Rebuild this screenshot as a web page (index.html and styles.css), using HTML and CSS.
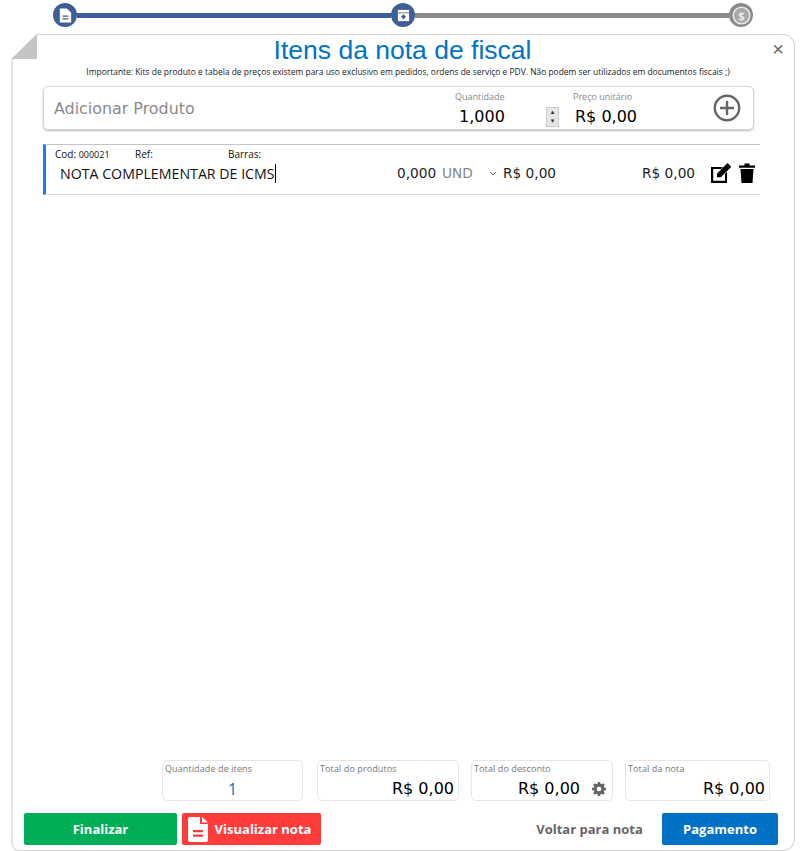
FILE: index.html
```html
<!DOCTYPE html>
<html lang="pt-BR">
<head>
<meta charset="utf-8">
<title>Itens da nota de fiscal</title>
<link rel="stylesheet" href="styles.css">
</head>
<body>
<div class="stepper">
  <span class="dot dot-on">
    <svg viewBox="0 0 24 24" width="17" height="17"><path fill="#fff" d="M4 2h10l6 6v14H4z"/><path fill="#3e5f95" d="M8 12h8v1.800H8zM8 16h8v1.800H8z"/></svg>
  </span>
  <span class="line line-on"></span>
  <span class="dot dot-on">
    <svg viewBox="0 0 24 24" width="15" height="15"><path fill="#fff" d="M3 3h18v18H3z"/><path fill="#3e5f95" d="M3 7h18v1.500H3zM12 10l4 4-4 4-4-4z"/></svg>
  </span>
  <span class="line line-off"></span>
  <span class="dot dot-off">
    <svg viewBox="0 0 24 24" width="19" height="19"><circle cx="12" cy="12" r="10.500" fill="#a8a8a8" stroke="#e8e8e8" stroke-width="2"/><text x="12" y="17.500" text-anchor="middle" class="dollar">$</text></svg>
  </span>
</div>

<main class="card">
  <span class="fold"></span>
  <button class="close" type="button">×</button>
  <h1 class="title">Itens da nota de fiscal</h1>
  <p class="notice">Importante: Kits de produto e tabela de preços existem para uso exclusivo em pedidos, ordens de serviço e PDV. Não podem ser utilizados em documentos fiscais ;)</p>

  <section class="add">
    <div class="add-name">Adicionar Produto</div>
    <div class="field field-qty">
      <label>Quantidade</label>
      <div class="value">1,000</div>
    </div>
    <div class="spin"><span>▴</span><span>▾</span></div>
    <div class="field field-price">
      <label>Preço unitário</label>
      <div class="value">R$ 0,00</div>
    </div>
    <svg class="plus" viewBox="0 0 28 28" width="28" height="28"><circle cx="14" cy="14" r="12.200" fill="none" stroke="#666" stroke-width="2.400"/><path d="M14 7v14M7 14h14" stroke="#666" stroke-width="2.400" fill="none"/></svg>
  </section>

  <section class="item">
    <div class="item-meta">
      <span class="m-cod">Cod: <small>000021</small></span>
      <span class="m-ref">Ref:</span>
      <span class="m-bar">Barras:</span>
    </div>
    <div class="item-main">
      <span class="i-name"><span class="i-cursor">NOTA COMPLEMENTAR DE ICMS</span></span>
      <span class="i-qty">0,000</span>
      <span class="i-und">UND</span>
      <svg class="i-caret" viewBox="0 0 8 5" width="8" height="5"><path d="M1 1l3 3 3-3" fill="none" stroke="#666" stroke-width="1"/></svg>
      <span class="i-price">R$ 0,00</span>
      <span class="i-total">R$ 0,00</span>
      <svg class="i-edit" viewBox="0 0 20 20" width="20" height="20"><path d="M0 4h12l-2 2H2.200v11.800H14V11l2-2v11H0z" fill="#000"/><path d="M6 10.500 15.500 1l3.800 3.800L9.800 14.300H6z" fill="#000"/><path d="M16 0.500 20 4.500" stroke="#000" stroke-width="1.500"/></svg>
      <svg class="i-trash" viewBox="0 0 16 20" width="16" height="20"><path d="M0 2.500h5.500V0.500h5v2H16v2.200H0zM1.500 6h13l-1 14h-11z" fill="#000"/></svg>
    </div>
  </section>

  <div class="spacer"></div>

  <section class="totals">
    <div class="total total-count"><label>Quantidade de itens</label><div class="count">1</div></div>
    <div class="total total-prod"><label>Total do produtos</label><div class="sum">R$ 0,00</div></div>
    <div class="total total-desc"><label>Total do desconto</label><div class="sum sum-gear">R$ 0,00
      <svg viewBox="0 0 24 24" width="14" height="14"><path fill="#666" fill-rule="evenodd" d="M10 1h4l.6 3.100 1.900.8L19.200 3 22 5.800l-1.900 2.700.8 1.900L24 11v4l-3.100.6-.8 1.900 1.900 2.700L19.200 23l-2.700-1.900-1.900.8L14 25h-4l-.6-3.100-1.900-.8L4.800 23 2 20.200l1.900-2.700-.8-1.900L0 15v-4l3.100-.6.8-1.900L2 5.800 4.800 3l2.700 1.900 1.900-.8zM12 9a4 4 0 1 0 0 8 4 4 0 0 0 0-8z" transform="translate(0 -1)"/></svg>
    </div></div>
    <div class="total total-nota"><label>Total da nota</label><div class="sum">R$ 0,00</div></div>
  </section>

  <footer class="actions">
    <button class="btn btn-green" type="button">Finalizar</button>
    <button class="btn btn-red" type="button">
      <svg viewBox="0 0 20 25" width="20" height="25"><path fill="#fff" fill-rule="evenodd" d="M2 0h10v7h8v16a2 2 0 0 1-2 2H2a2 2 0 0 1-2-2V2a2 2 0 0 1 2-2zM14 0l6 5.500h-6zM5 13v2.200h10V13zM5 17.500v2.200h10v-2.200z"/></svg>
      Visualizar nota
    </button>
    <span class="grow"></span>
    <button class="btn btn-link" type="button">Voltar para nota</button>
    <button class="btn btn-blue" type="button">Pagamento</button>
  </footer>
</main>
</body>
</html>
```

FILE: styles.css
```css
* { box-sizing: border-box; }
html, body { margin: 0; padding: 0; }
body {
  width: 801px;
  height: 851px;
  overflow: hidden;
  background: #fff;
  font-family: "Open Sans", "Liberation Sans", sans-serif;
  color: #000;
}

/* stepper */
.stepper {
  height: 34px;
  padding: 3px 0 0 53px;
  width: 753px;
  display: flex;
  align-items: flex-start;
}
.dot {
  flex: none;
  width: 24px;
  height: 24px;
  border-radius: 50%;
  display: flex;
  align-items: center;
  justify-content: center;
}
.dot-on { background: #3e5f95; }
.dot-off { background: #8a8a8a; }
.dollar { font: 700 14px "Open Sans", sans-serif; fill: #eee; }
.line { flex: 1; height: 5px; margin-top: 10px; }
.line-on { background: #3e5f95; }
.line-off { background: #8a8a8a; }

/* card */
.card {
  position: relative;
  margin-left: 11px;
  width: 784px;
  height: 817px;
  border: 1px solid #d2d2d2;
  border-left: 2px solid #e4e4e4;
  border-radius: 0 12px 12px 8px;
  display: flex;
  flex-direction: column;
}
.fold {
  position: absolute;
  left: -2px;
  top: -1px;
  width: 26px;
  height: 25px;
  background: linear-gradient(to bottom right, #fff 0 49.500%, #c4c4c4 50.500% 100%);
}
.close {
  position: absolute;
  right: 10px;
  top: 2px;
  border: 0;
  padding: 0;
  background: none;
  color: #666;
  font: 20px/24px "Liberation Sans", sans-serif;
}
.title {
  margin: 0 0 0 -2px;
  text-align: center;
  color: #0073c6;
  font: 400 26.500px/30px "Liberation Sans", sans-serif;
}
.notice {
  margin: 1px 0 0 9px;
  text-align: center;
  font-size: 8.450px;
  line-height: 12px;
  color: #222;
}

/* add product */
.add {
  margin: 8px 0 0 30px;
  width: 711px;
  height: 44px;
  border: 1px solid #d4d4d4;
  border-radius: 5px;
  box-shadow: 0 1px 2px #bbb;
  padding: 0 11px 0 10px;
  display: flex;
  align-items: center;
}
.add-name {
  width: 401px;
  margin-top: 1px;
  font-family: "DejaVu Sans", sans-serif;
  font-size: 15.900px;
  color: #8a8a8a;
}
.field { display: flex; flex-direction: column; padding-top: 1px; }
.field label { font-size: 9px; line-height: 12px; color: #8a8a8a; }
.value { font-family: "DejaVu Sans", sans-serif; font-size: 16px; line-height: 20px; margin-top: 4px; }
.field-qty { width: 91px; }
.field-qty .value { margin-left: 4px; }
.spin {
  width: 13px;
  height: 20px;
  margin: 17px 0 0 0;
  background: #e6e6e6;
  border: 1px solid #ccc;
  display: flex;
  flex-direction: column;
  align-items: center;
  font: 7px/9px "DejaVu Sans", sans-serif;
  color: #333;
}
.field-price { margin-left: 14px; width: 141px; }
.field-price .value { margin-left: 2px; }
.plus { flex: none; margin-left: -1px; }

/* item */
.item {
  margin: 14px 0 0 30px;
  width: 717px;
  height: 51px;
  border-top: 1px solid #c4c4c4;
  border-bottom: 1px solid #d8d8d8;
  border-left: 3px solid #1a7fe8;
  padding-left: 9px;
}
.item-meta { display: flex; font-size: 10px; line-height: 14px; margin-top: 2px; color: #111; }
.item-meta small { font-size: 9px; }
.m-cod { width: 80px; }
.m-ref { width: 93px; }
.item-main { display: flex; align-items: center; height: 24px; margin-top: -1px; font-family: "DejaVu Sans", sans-serif; font-size: 13.700px; color: #222; }
.i-name { width: 342px; padding-left: 5px; color: #111; font-family: "Open Sans", sans-serif; font-size: 14.200px; }
.i-cursor { border-right: 1px solid #000; }
.i-qty { width: 45px; }
.i-und { width: 47px; color: #888; }
.i-caret { flex: none; width: 8px; margin-right: 6px; }
.i-price { width: 139px; }
.i-total { width: 69px; }
.i-edit { flex: none; margin-right: 8px; }
.i-trash { flex: none; }

.spacer { flex: 1; }

/* totals */
.totals { display: flex; height: 41px; margin-left: 149px; }
.total {
  position: relative;
  height: 41px;
  border: 1px solid #e6e6e6;
  border-radius: 5px;
  padding: 2px;
}
.total label { display: block; font-size: 9px; line-height: 12px; color: #777; letter-spacing: .1px; }
.total-count { width: 141px; margin-right: 14px; }
.total-prod { width: 142px; margin-right: 12px; }
.total-desc { width: 142px; margin-right: 12px; }
.total-nota { width: 145px; }
.count { text-align: center; font-size: 16px; line-height: 22px; color: #0073c6; margin-top: 3px; }
.sum {
  text-align: right;
  padding-right: 2px;
  font-family: "DejaVu Sans", sans-serif;
  font-size: 16px;
  line-height: 22px;
  margin-top: 3px;
}
.sum-gear { display: flex; justify-content: flex-end; align-items: center; gap: 12px; padding-right: 4px; }

/* actions */
.actions { display: flex; align-items: center; margin: 12px 16px 5px 11px; height: 32px; }
.btn {
  height: 32px;
  border: 0;
  border-radius: 2px;
  font-family: "Open Sans", sans-serif;
  font-weight: 700;
  font-size: 13px;
  color: #fff;
  display: flex;
  align-items: center;
  justify-content: center;
  padding: 0;
}
.btn-green { width: 153px; background: #00ae57; margin-right: 5px; }
.btn-red { width: 139px; background: #ff3c3c; gap: 7px; padding-right: 4px; }
.grow { flex: 1; }
.btn-link { width: 107px; margin-right: 19px; background: none; color: #666; }
.btn-blue { width: 116px; background: #0071c5; }
```
